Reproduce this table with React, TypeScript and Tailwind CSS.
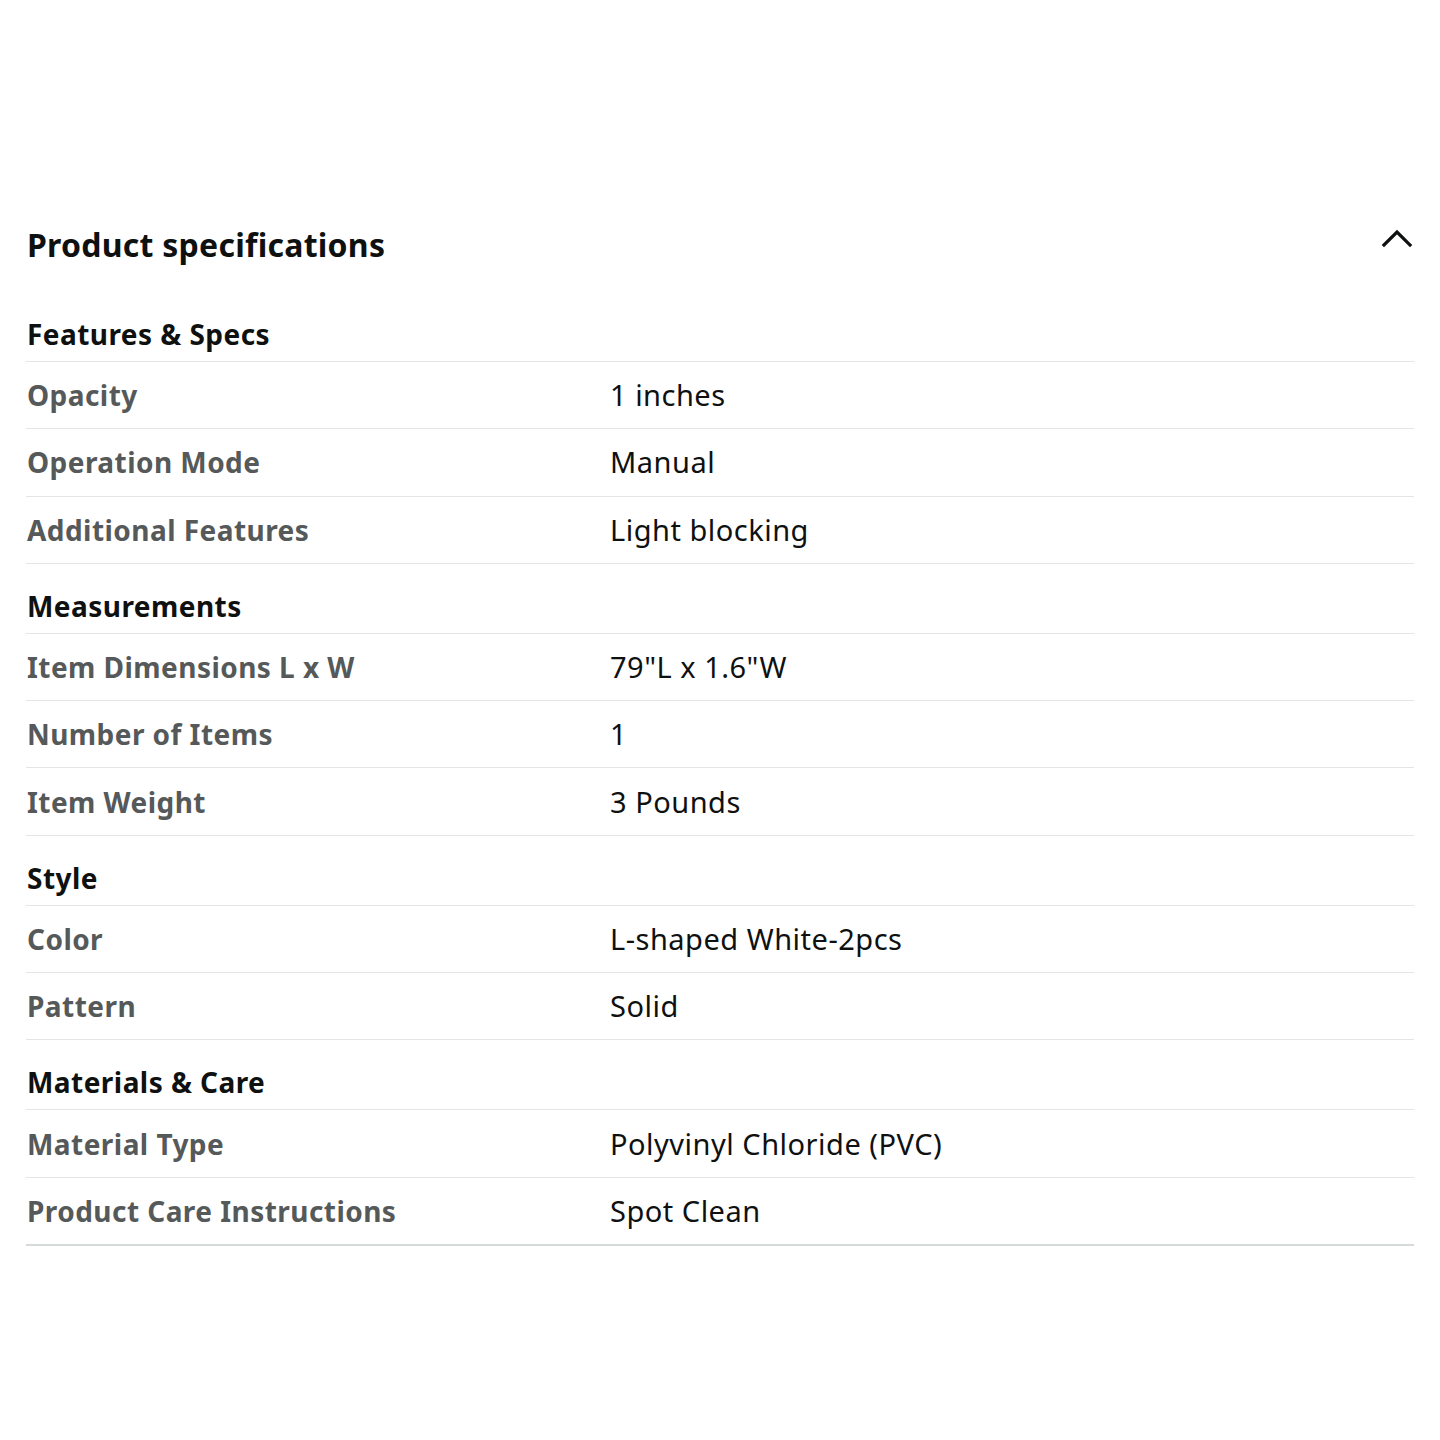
type Row = { label: string; value: string };
type Section = { title: string; rows: Row[] };

const sections: Section[] = [
  {
    title: "Features & Specs",
    rows: [
      { label: "Opacity", value: "1 inches" },
      { label: "Operation Mode", value: "Manual" },
      { label: "Additional Features", value: "Light blocking" },
    ],
  },
  {
    title: "Measurements",
    rows: [
      { label: "Item Dimensions L x W", value: '79"L x 1.6"W' },
      { label: "Number of Items", value: "1" },
      { label: "Item Weight", value: "3 Pounds" },
    ],
  },
  {
    title: "Style",
    rows: [
      { label: "Color", value: "L-shaped White-2pcs" },
      { label: "Pattern", value: "Solid" },
    ],
  },
  {
    title: "Materials & Care",
    rows: [
      { label: "Material Type", value: "Polyvinyl Chloride (PVC)" },
      { label: "Product Care Instructions", value: "Spot Clean" },
    ],
  },
];

const Chevron = () => (
  <svg width="32" height="20" viewBox="0 0 32 20" fill="none" className="mr-[1px] mt-[6px]">
    <path d="M3 17 L16 4 L29 17" stroke="#0f1111" strokeWidth="3.2" strokeLinecap="square" />
  </svg>
);

export default function App() {
  return (
    <div className="min-h-[1440px] w-[1440px] bg-white font-['Noto_Sans',sans-serif] text-[#0f1111]">
      <div className="px-[26px]">
        {/* header */}
        <div className="flex h-[292px] items-start justify-between pt-[222px]">
          <h2 className="pl-px text-[32px] font-bold leading-[46px] tracking-[0.25px]">Product specifications</h2>
          <Chevron />
        </div>

        {sections.map((section, si) => (
          <div key={section.title}>
            <div className="flex h-[70px] items-end border-b border-[#e3e6e6] pb-[10px]">
              <h3 className="pl-px text-[28px] font-bold leading-[34px] tracking-[0.45px]">{section.title}</h3>
            </div>
            {section.rows.map((row, ri) => {
              const last = si === sections.length - 1 && ri === section.rows.length - 1;
              return (
                <div
                  key={row.label}
                  className={
                    last
                      ? "grid h-[68px] grid-cols-[584px_1fr] items-center border-b-2 border-[#d5dbdb]"
                      : "grid h-[67.3px] grid-cols-[584px_1fr] items-center border-b border-[#e3e6e6]"
                  }
                >
                  <div className="pl-px text-[28px] font-bold leading-[34px] tracking-[0.45px] text-[#565959]">
                    {row.label}
                  </div>
                  <div className="text-[29px] leading-[34px] tracking-[0.5px]">{row.value}</div>
                </div>
              );
            })}
          </div>
        ))}
      </div>
    </div>
  );
}
